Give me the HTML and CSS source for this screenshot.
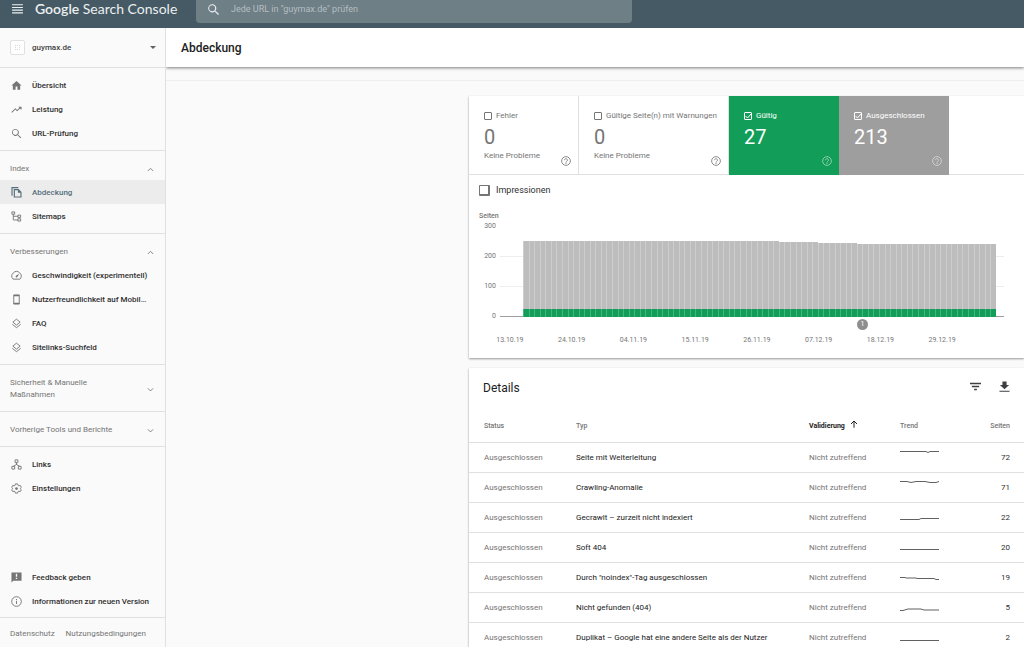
FILE: index.html
```html
<!DOCTYPE html>
<html lang="de">
<head>
    <meta charset="UTF-8">
    <meta name="viewport" content="width=device-width, initial-scale=1.0">
    <title>Abdeckung</title>
    <link rel="stylesheet" href="styles.css">
</head>
<body>
    <svg class="sprite" aria-hidden="true">
        <symbol id="i-menu" viewBox="0 0 24 24"><path d="M2 4h20v2H2zM2 9h20v2H2zM2 14h20v2H2zM2 19h20v2H2z"/></symbol>
        <symbol id="i-search" viewBox="0 0 24 24"><path d="M16.500 15h-.8l-.3-.3a7.500 7.500 0 1 0-.8.8l.3.300v.8l5.600 5.600 1.700-1.700zM9.500 15a5.500 5.500 0 1 1 0-11 5.500 5.500 0 0 1 0 11z"/></symbol>
        <symbol id="i-home" viewBox="0 0 24 24"><path d="M10 21v-7h4v7h6v-9h3L12 2 1 12h3v9z"/></symbol>
        <symbol id="i-trend" viewBox="0 0 24 24"><path d="M16 6l2.300 2.300-4.900 4.900-4-4L1 17.600 2.400 19l7-7 4 4 6.300-6.300L23 13V6z"/></symbol>
        <symbol id="i-copy" viewBox="0 0 24 24"><path d="M16 0H1v19h2.500V2.500H16zM6 4.500V23h17V11l-6.500-6.500zm2.500 16V7H15v5.500h5.500v8z"/></symbol>
        <symbol id="i-tree" viewBox="0 0 24 24"><path fill="none" stroke="currentColor" stroke-width="2" d="M2 2h6v5H2zM15 9h6v5h-6zM15 17h6v5h-6zM5 7v12.500h10M5 11.500h10"/></symbol>
        <symbol id="i-speed" viewBox="0 0 24 24"><path fill="none" stroke="currentColor" stroke-width="2" d="M4.500 20a10 10 0 1 1 15 0z"/><path d="M18 8l-4.300 7.400a2 2 0 1 1-3-2.700z"/></symbol>
        <symbol id="i-phone" viewBox="0 0 24 24"><path fill="none" stroke="currentColor" stroke-width="2" d="M6 2h12v20H6z"/><path d="M6 2h12v3H6zM6 19h12v3H6z"/></symbol>
        <symbol id="i-layers" viewBox="0 0 24 24"><path fill="none" stroke="currentColor" stroke-width="2" d="M12 2.500l8 6.500-8 6.500L4 9zM3 14l9 7 9-7"/></symbol>
        <symbol id="i-links" viewBox="0 0 24 24"><path fill="none" stroke="currentColor" stroke-width="2" d="M9 2h6v6H9zM2 16h6v6H2zM16 16h6v6h-6zM12 8v5M5 16l7-4 7 4"/></symbol>
        <symbol id="i-gear" viewBox="0 0 24 24"><path fill="none" stroke="currentColor" stroke-width="2" stroke-linejoin="round" d="M9.500 2h5l.6 3 2 1.200 3-1 2.400 4.200L20.200 11.500v1l2.300 2.100-2.400 4.200-3-1-2 1.200-.6 3h-5l-.6-3-2-1.200-3 1-2.400-4.200 2.300-2.100v-1L1.500 9.400l2.400-4.200 3 1 2-1.200z"/><circle cx="12" cy="12" r="3"/></symbol>
        <symbol id="i-feedback" viewBox="0 0 24 24"><path d="M23 1H1v22l4-4h18zM13.500 15.500h-3v-3h3zm0-5h-3V4h3z"/></symbol>
        <symbol id="i-info" viewBox="0 0 24 24"><circle cx="12" cy="12" r="10.500" fill="none" stroke="currentColor" stroke-width="2"/><path d="M11 6.500h2v2h-2zM11 10.500h2v7h-2z"/></symbol>
        <symbol id="i-help" viewBox="0 0 24 24"><circle cx="12" cy="12" r="10.500" fill="none" stroke="currentColor" stroke-width="2"/><path fill="none" stroke="currentColor" stroke-width="2" d="M8.500 10a3.500 3.500 0 1 1 5.500 2.800c-1.300 1-2 1.400-2 3.200"/><path d="M11 17h2v2h-2z"/></symbol>
        <symbol id="i-up" viewBox="0 0 24 24"><path fill="none" stroke="currentColor" stroke-width="3" d="M3 17l9-9 9 9"/></symbol>
        <symbol id="i-down" viewBox="0 0 24 24"><path fill="none" stroke="currentColor" stroke-width="3" d="M3 8l9 9 9-9"/></symbol>
        <symbol id="i-filter" viewBox="0 0 24 24"><path d="M0 4h24v3H0zM4 10.500h16v3H4zM9 17h6v3H9z"/></symbol>
        <symbol id="i-download" viewBox="0 0 24 24"><path d="M22 8.500h-5.500V1h-9v7.500H2L12 18zM1 21h22v2.500H1z"/></symbol>
        <symbol id="i-arrow" viewBox="0 0 24 24"><path fill="none" stroke="currentColor" stroke-width="3" d="M12 23V4M3 12l9-9 9 9"/></symbol>
    </svg>

    <header class="topbar">
        <button class="menu-button" aria-label="Menü"><svg><use href="#i-menu"/></svg></button>
        <a class="logo" href="#"><b>Google</b> Search Console</a>
        <form class="search">
            <svg><use href="#i-search"/></svg>
            <input type="text" aria-label="URL prüfen" placeholder='Jede URL in "guymax.de" prüfen'>
        </form>
    </header>

    <div class="layout">
        <nav class="sidebar">
            <button class="property">
                <span class="favicon"><i></i></span>
                <span class="property-name">guymax.de</span>
                <span class="caret"></span>
            </button>
            <div class="nav-section">
                <a class="nav-item" href="#"><svg><use href="#i-home"/></svg><span>Übersicht</span></a>
                <a class="nav-item" href="#"><svg><use href="#i-trend"/></svg><span>Leistung</span></a>
                <a class="nav-item" href="#"><svg><use href="#i-search"/></svg><span>URL-Prüfung</span></a>
            </div>
            <div class="nav-section">
                <button class="nav-head">Index<svg><use href="#i-up"/></svg></button>
                <a class="nav-item active" href="#"><svg><use href="#i-copy"/></svg><span>Abdeckung</span></a>
                <a class="nav-item" href="#"><svg><use href="#i-tree"/></svg><span>Sitemaps</span></a>
            </div>
            <div class="nav-section">
                <button class="nav-head">Verbesserungen<svg><use href="#i-up"/></svg></button>
                <a class="nav-item" href="#"><svg><use href="#i-speed"/></svg><span>Geschwindigkeit (experimentell)</span></a>
                <a class="nav-item" href="#"><svg><use href="#i-phone"/></svg><span>Nutzerfreundlichkeit auf Mobil…</span></a>
                <a class="nav-item" href="#"><svg><use href="#i-layers"/></svg><span>FAQ</span></a>
                <a class="nav-item" href="#"><svg><use href="#i-layers"/></svg><span>Sitelinks-Suchfeld</span></a>
            </div>
            <div class="nav-section">
                <button class="nav-head">Sicherheit &amp; Manuelle<br>Maßnahmen<svg><use href="#i-down"/></svg></button>
            </div>
            <div class="nav-section">
                <button class="nav-head">Vorherige Tools und Berichte<svg><use href="#i-down"/></svg></button>
            </div>
            <div class="nav-section last">
                <a class="nav-item" href="#"><svg><use href="#i-links"/></svg><span>Links</span></a>
                <a class="nav-item" href="#"><svg><use href="#i-gear"/></svg><span>Einstellungen</span></a>
            </div>
            <div class="nav-section bottom">
                <a class="nav-item" href="#"><svg><use href="#i-feedback"/></svg><span>Feedback geben</span></a>
                <a class="nav-item" href="#"><svg><use href="#i-info"/></svg><span>Informationen zur neuen Version</span></a>
            </div>
            <div class="legal">
                <a href="#">Datenschutz</a>
                <a href="#">Nutzungsbedingungen</a>
            </div>
        </nav>

        <main class="main">
            <h1 class="page-title">Abdeckung</h1>
            <div class="strip"></div>
            <div class="content">
                <section class="card">
                    <div class="tiles">
                        <div class="tile">
                            <label><input type="checkbox">Fehler</label>
                            <strong>0</strong>
                            <div class="tile-foot"><span>Keine Probleme</span><svg><use href="#i-help"/></svg></div>
                        </div>
                        <div class="tile">
                            <label><input type="checkbox">Gültige Seite(n) mit Warnungen</label>
                            <strong>0</strong>
                            <div class="tile-foot"><span>Keine Probleme</span><svg><use href="#i-help"/></svg></div>
                        </div>
                        <div class="tile valid">
                            <label><input type="checkbox" checked>Gültig</label>
                            <strong>27</strong>
                            <div class="tile-foot"><span></span><svg><use href="#i-help"/></svg></div>
                        </div>
                        <div class="tile excluded">
                            <label><input type="checkbox" checked>Ausgeschlossen</label>
                            <strong>213</strong>
                            <div class="tile-foot"><span></span><svg><use href="#i-help"/></svg></div>
                        </div>
                    </div>
                    <label class="impressions"><input type="checkbox">Impressionen</label>
                    <div class="chart">
                        <div class="chart-title">Seiten</div>
                        <div class="chart-body">
                            <div class="y-axis"><span>300</span><span>200</span><span>100</span><span>0</span></div>
                            <div class="plot" id="plot"></div>
                        </div>
                        <div class="markers"><button>1</button></div>
                        <div class="x-axis">
                            <span>13.10.19</span><span>24.10.19</span><span>04.11.19</span><span>15.11.19</span>
                            <span>26.11.19</span><span>07.12.19</span><span>18.12.19</span><span>29.12.19</span>
                        </div>
                    </div>
                </section>

                <section class="card">
                    <div class="details-head">
                        <h2>Details</h2>
                        <button aria-label="Filtern"><svg><use href="#i-filter"/></svg></button>
                        <button aria-label="Herunterladen"><svg><use href="#i-download"/></svg></button>
                    </div>
                    <table>
                        <thead>
                            <tr>
                                <th class="col-status">Status</th>
                                <th>Typ</th>
                                <th class="col-validation sorted">Validierung<svg><use href="#i-arrow"/></svg></th>
                                <th class="col-trend">Trend</th>
                                <th class="col-pages">Seiten</th>
                            </tr>
                        </thead>
                        <tbody>
                            <tr><td>Ausgeschlossen</td><td>Seite mit Weiterleitung</td><td>Nicht zutreffend</td><td><svg viewBox="0 0 39 18"><path d="M0 2.500h26l2 1 2-1h9"/></svg></td><td>72</td></tr>
                            <tr><td>Ausgeschlossen</td><td>Crawling-Anomalie</td><td>Nicht zutreffend</td><td><svg viewBox="0 0 39 18"><path d="M0 2.500h7l4 1 5-1h9l5 1h6l3-1"/></svg></td><td>71</td></tr>
                            <tr><td>Ausgeschlossen</td><td>Gecrawlt – zurzeit nicht indexiert</td><td>Nicht zutreffend</td><td><svg viewBox="0 0 39 18"><path d="M0 10.500h19l2-1h18"/></svg></td><td>22</td></tr>
                            <tr><td>Ausgeschlossen</td><td>Soft 404</td><td>Nicht zutreffend</td><td><svg viewBox="0 0 39 18"><path d="M0 10.500h39"/></svg></td><td>20</td></tr>
                            <tr><td>Ausgeschlossen</td><td>Durch "noindex"-Tag ausgeschlossen</td><td>Nicht zutreffend</td><td><svg viewBox="0 0 39 18"><path d="M0 8.500h5l1 .5h10l1 .5h17l2 1h3"/></svg></td><td>19</td></tr>
                            <tr><td>Ausgeschlossen</td><td>Nicht gefunden (404)</td><td>Nicht zutreffend</td><td><svg viewBox="0 0 39 18"><path d="M0 11.500h3l5-1.500h13l3 1h15"/></svg></td><td>5</td></tr>
                            <tr><td>Ausgeschlossen</td><td>Duplikat – Google hat eine andere Seite als der Nutzer als kanonische Seite bestimmt</td><td>Nicht zutreffend</td><td><svg viewBox="0 0 39 18"><path d="M0 11.500h39"/></svg></td><td>2</td></tr>
                        </tbody>
                    </table>
                </section>
            </div>
        </main>
    </div>

    <script>
        // [days, total pages]
        const totals = [[46, 250], [7, 247], [7, 243], [17, 242], [8, 240]];
        const valid = 27;
        const max = 300;
        const plot = document.getElementById('plot');

        totals.forEach(([days, total]) => {
            for (let i = 0; i < days; i++) {
                const bar = document.createElement('div');
                bar.className = 'bar';
                bar.style.height = (total / max * 100) + '%';
                const part = document.createElement('div');
                part.className = 'bar-valid';
                part.style.height = (valid / total * 100) + '%';
                bar.appendChild(part);
                plot.appendChild(bar);
            }
        });
    </script>
</body>
</html>
```

FILE: styles.css
```css
* {
    box-sizing: border-box;
}
body {
    margin: 0;
    height: 100vh;
    display: flex;
    flex-direction: column;
    overflow: hidden;
    font-family: Roboto, sans-serif;
    font-size: 8px;
    line-height: 12px;
    color: #3c4043;
    background-color: #fafafa;
}
a {
    color: inherit;
    text-decoration: none;
}
button, input {
    font: inherit;
    color: inherit;
    margin: 0;
    padding: 0;
    border: none;
    background: none;
}
button {
    cursor: pointer;
    text-align: left;
}
svg {
    display: block;
    flex: none;
    fill: currentColor;
}
.sprite {
    display: none;
}

/* top bar */
.topbar {
    display: flex;
    align-items: flex-start;
    height: 28px;
    flex: none;
    padding-left: 11px;
    background-color: #455a64;
    color: #eceff1;
}
.menu-button {
    padding-top: 2px;
}
.menu-button svg {
    width: 13px;
    height: 13px;
}
.logo {
    flex: none;
    width: 172px;
    padding-left: 11px;
    font-family: Lato, sans-serif;
    font-size: 14px;
    line-height: 18px;
    white-space: nowrap;
}
.logo b {
    font-weight: 600;
}
.search {
    display: flex;
    align-items: center;
    gap: 11px;
    width: 43%;
    height: 23px;
    padding: 0 12px 5px 11px;
    border-radius: 0 0 4px 4px;
    background-color: #6e7f85;
}
.search svg {
    width: 13px;
    height: 13px;
}
.search input {
    flex: 1;
    font-size: 9px;
    outline: none;
}
.search input::placeholder {
    color: #b4bec2;
}

/* sidebar */
.layout {
    display: flex;
    flex: 1;
    min-height: 0;
}
.sidebar {
    display: flex;
    flex-direction: column;
    flex: none;
    width: 166px;
    border-right: 1px solid #e0e0e0;
    color: #757575;
}
.property {
    display: flex;
    align-items: center;
    height: 40px;
    flex: none;
    padding: 0 9px 0 10px;
    border-bottom: 1px solid #e0e0e0;
    color: #424242;
    font-weight: 500;
}
.favicon {
    display: flex;
    align-items: center;
    justify-content: center;
    width: 15px;
    height: 15px;
    border: 1px solid #e0e0e0;
    border-radius: 2px;
    background-color: white;
}
.favicon i {
    width: 5px;
    height: 5px;
    border: 1px dotted #d6d6d6;
}
.property-name {
    flex: 1;
    padding-left: 7px;
}
.caret {
    border: 3px solid transparent;
    border-top-color: #616161;
    border-bottom: none;
}
.nav-section {
    padding: 5px 0;
    border-bottom: 1px solid #e0e0e0;
}
.nav-section.last {
    border-bottom: none;
}
.nav-section.bottom {
    margin-top: auto;
    padding-bottom: 4px;
}
.nav-item {
    display: flex;
    align-items: center;
    gap: 10px;
    height: 24px;
    padding: 0 10px 0 11px;
}
.nav-item svg {
    width: 11px;
    height: 11px;
}
.nav-item span {
    padding-top: 2px;
    white-space: nowrap;
    font-weight: 500;
    color: #303030;
}
.nav-item.active {
    background-color: #ececec;
}
.nav-item.active, .nav-item.active span {
    color: #546e7a;
}
.nav-head {
    display: flex;
    align-items: center;
    width: 100%;
    padding: 7px 11px 5px 10px;
}
.nav-head svg {
    width: 7px;
    height: 7px;
    margin-left: auto;
}
.legal {
    display: flex;
    gap: 11px;
    padding: 10px 10px 7px;
}

/* main */
.main {
    flex: 1;
    min-width: 0;
    overflow: hidden;
}
.page-title {
    position: relative;
    margin: 0;
    height: 39px;
    padding-left: 15px;
    font-size: 12px;
    font-weight: 500;
    line-height: 40px;
    color: #212121;
    background-color: white;
    box-shadow: 0 1px 3px rgba(0, 0, 0, 0.5);
}
.strip {
    height: 14px;
    border-bottom: 1px solid #eeeeee;
}
.content {
    display: flex;
    flex-direction: column;
    gap: 10px;
    padding: 15px 0 15px 303px;
}
.card {
    background-color: white;
    box-shadow: 0 1px 2px rgba(0, 0, 0, 0.4);
}

/* tiles */
.tiles {
    display: grid;
    grid-template-columns: 110px 150px 110px 110px;
    border-bottom: 1px solid #e0e0e0;
}
.tile {
    padding: 14px 7px 8px 15px;
    border-right: 1px solid #e0e0e0;
    color: #757575;
}
.tile label {
    display: flex;
    align-items: center;
    gap: 4px;
    white-space: nowrap;
}
.tile input, .impressions input {
    appearance: none;
    width: 8px;
    height: 8px;
    border: 1px solid currentColor;
    border-radius: 1px;
}
.tile input:checked {
    background: center / 8px 8px no-repeat url("data:image/svg+xml,%3Csvg xmlns='http://www.w3.org/2000/svg' viewBox='0 0 8 8'%3E%3Cpath d='M1.500 4l2 2 3.500-4' fill='none' stroke='white'/%3E%3C/svg%3E");
}
.tile strong {
    display: block;
    margin-top: 3px;
    font-size: 20px;
    font-weight: 400;
    line-height: 24px;
}
.tile-foot {
    display: flex;
    justify-content: space-between;
    height: 17px;
    line-height: 14px;
}
.tile-foot svg {
    width: 10px;
    height: 10px;
    align-self: flex-end;
}
.tile.valid, .tile.excluded {
    margin-bottom: -1px;
    border-right: none;
    color: white;
}
.tile.valid {
    background-color: #129e58;
}
.tile.excluded {
    background-color: #9e9e9e;
}
.tile.valid svg, .tile.excluded svg {
    opacity: 0.6;
}
.impressions {
    display: flex;
    align-items: center;
    gap: 6px;
    padding: 9px 10px;
    font-size: 9px;
    color: #303030;
}
.impressions input {
    width: 11px;
    height: 11px;
    border-color: #757575;
    border-width: 1px 2px 2px 1px;
}

/* chart */
.chart {
    padding: 6px 20px 13px 10px;
    font-size: 7px;
    line-height: 10px;
    color: #757575;
}
.chart-title {
    font-weight: 500;
}
.chart-body {
    display: flex;
    gap: 4px;
}
.y-axis {
    display: flex;
    flex-direction: column;
    justify-content: space-between;
    width: 17px;
    height: 100px;
    text-align: right;
}
.plot {
    display: flex;
    align-items: flex-end;
    flex: 1;
    height: 91px;
    margin-top: 5px;
    padding: 0 8px 0 23px;
    background: linear-gradient(#eeeeee, #eeeeee) 0 30px / 100% 1px no-repeat,
        linear-gradient(#eeeeee, #eeeeee) 0 60px / 100% 1px no-repeat,
        linear-gradient(#9e9e9e, #9e9e9e) 0 90px / 100% 1px no-repeat;
}
.bar {
    display: flex;
    align-items: flex-end;
    flex: 1;
    border-left: 1px solid rgba(255, 255, 255, 0.25);
    background-color: #bdbdbd;
}
.bar-valid {
    width: 100%;
    background-color: #129e58;
    box-shadow: -1px 0 #45b37c;
}
.markers {
    height: 14px;
    margin-top: -2px;
    padding-left: 72%;
}
.markers button {
    display: block;
    width: 11px;
    height: 11px;
    border-radius: 50%;
    line-height: 11px;
    text-align: center;
    color: white;
    background-color: #8e8e8e;
}
.x-axis {
    display: grid;
    grid-template-columns: repeat(8, 1fr);
    margin: 2px 31px 0 0;
    text-align: center;
}

/* details */
.details-head {
    display: flex;
    align-items: center;
    gap: 18px;
    padding: 10px 14px;
}
.details-head h2 {
    flex: 1;
    margin: 0;
    font-size: 12px;
    font-weight: 400;
    line-height: 20px;
    color: #212121;
}
.details-head button {
    padding-bottom: 4px;
}
.details-head svg {
    width: 11px;
    height: 11px;
}
table {
    width: 100%;
    table-layout: fixed;
    border-collapse: collapse;
}
th, td {
    padding: 9px 0 8px;
    border-bottom: 1px solid #e0e0e0;
    text-align: left;
    vertical-align: top;
}
th {
    padding: 12px 0 10px;
    font-size: 7px;
    font-weight: 500;
    color: #757575;
    white-space: nowrap;
}
td {
    color: #212121;
}
td:nth-child(odd) {
    color: #757575;
}
td:nth-child(2) {
    padding-right: 32px;
}
th:first-child, td:first-child {
    padding-left: 15px;
}
th:last-child, td:last-child {
    padding-right: 14px;
    text-align: right;
}
td:last-child {
    color: #303030;
}
td:nth-child(4) {
    padding: 6px 0 5px;
}
td svg {
    width: 39px;
    height: 18px;
    fill: none;
    stroke: #616161;
}
.col-status {
    width: 107px;
}
.col-validation {
    width: 91px;
}
.col-trend, .col-pages {
    width: 62px;
}
th.sorted {
    font-weight: 700;
    color: #212121;
}
th.sorted svg {
    display: inline-block;
    width: 8px;
    height: 8px;
    margin-left: 5px;
}
```
